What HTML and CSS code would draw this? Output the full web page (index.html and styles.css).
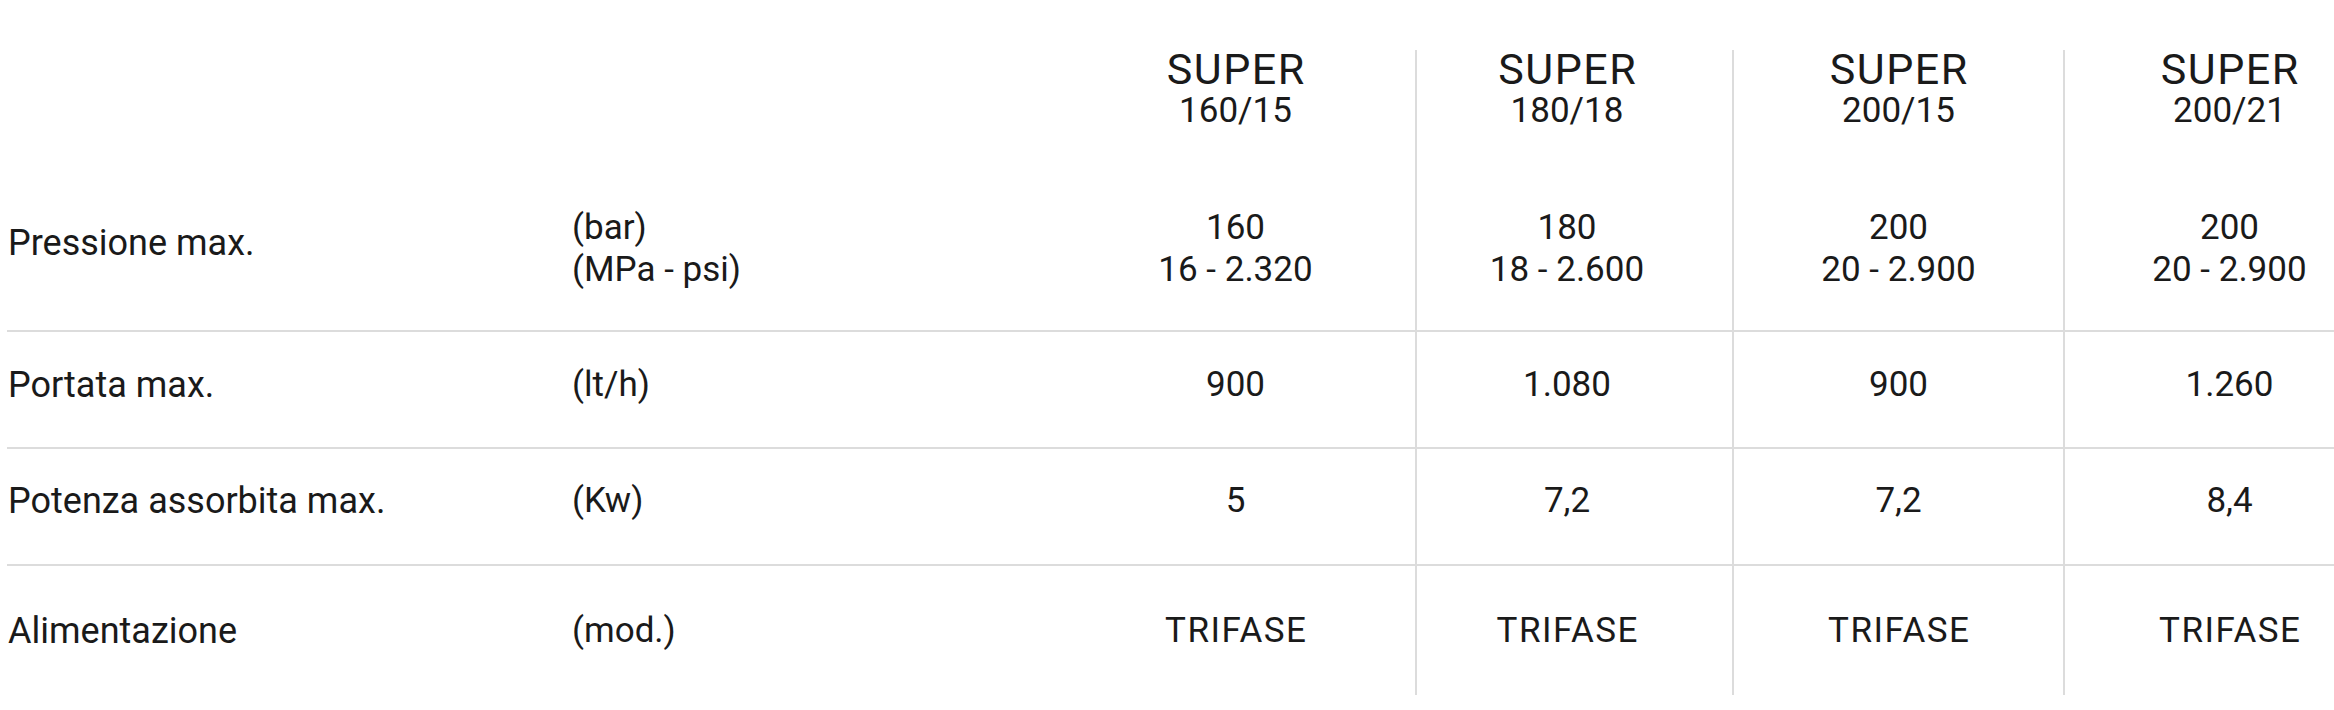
FILE: index.html
```html
<!DOCTYPE html>
<html lang="it">
<head>
<meta charset="utf-8">
<title>Caratteristiche tecniche SUPER</title>
<link rel="stylesheet" href="styles.css">
</head>
<body>
<div class="specs">
  <div class="row row-head">
    <div class="cell label"></div>
    <div class="cell unit"></div>
    <div class="cell val c1"><span class="series">SUPER</span><span class="model">160/15</span></div>
    <div class="cell val c2"><span class="series">SUPER</span><span class="model">180/18</span></div>
    <div class="cell val c3"><span class="series">SUPER</span><span class="model">200/15</span></div>
    <div class="cell val c4"><span class="series">SUPER</span><span class="model">200/21</span></div>
  </div>
  <div class="row row-press">
    <div class="cell label">Pressione max.</div>
    <div class="cell unit"><span>(bar)</span><span>(MPa - psi)</span></div>
    <div class="cell val c1"><span>160</span><span>16 - 2.320</span></div>
    <div class="cell val c2"><span>180</span><span>18 - 2.600</span></div>
    <div class="cell val c3"><span>200</span><span>20 - 2.900</span></div>
    <div class="cell val c4"><span>200</span><span>20 - 2.900</span></div>
  </div>
  <div class="row row-flow">
    <div class="cell label">Portata max.</div>
    <div class="cell unit"><span>(lt/h)</span></div>
    <div class="cell val c1"><span>900</span></div>
    <div class="cell val c2"><span>1.080</span></div>
    <div class="cell val c3"><span>900</span></div>
    <div class="cell val c4"><span>1.260</span></div>
  </div>
  <div class="row row-power">
    <div class="cell label">Potenza assorbita max.</div>
    <div class="cell unit"><span>(Kw)</span></div>
    <div class="cell val c1"><span>5</span></div>
    <div class="cell val c2"><span>7,2</span></div>
    <div class="cell val c3"><span>7,2</span></div>
    <div class="cell val c4"><span>8,4</span></div>
  </div>
  <div class="row row-supply">
    <div class="cell label">Alimentazione</div>
    <div class="cell unit"><span>(mod.)</span></div>
    <div class="cell val c1"><span class="caps">TRIFASE</span></div>
    <div class="cell val c2"><span class="caps">TRIFASE</span></div>
    <div class="cell val c3"><span class="caps">TRIFASE</span></div>
    <div class="cell val c4"><span class="caps">TRIFASE</span></div>
  </div>
</div>
</body>
</html>
```
FILE: styles.css
```css
html, body {
  margin: 0;
  padding: 0;
  overflow: hidden;
  background: #ffffff;
}

body {
  font-family: Roboto, "Noto Sans", "Liberation Sans", sans-serif;
  color: #1a1a1a;
}

.specs {
  width: max-content;
  padding: 50px 0 0 7px;
}

.row {
  display: grid;
  grid-template-columns: 565px 498px 345px 317px 331px 331px;
  align-items: stretch;
  box-sizing: border-box;
}

.row-press,
.row-flow,
.row-power {
  border-bottom: 2px solid #dcdcdc;
}

.row-head { height: 100px; }
.row-press { height: 182px; }
.row-flow { height: 117px; }
.row-power { height: 117px; }
.row-supply { height: 129px; }

.cell {
  display: flex;
  flex-direction: column;
  font-size: 35px;
  line-height: 42px;
}

.label {
  font-size: 36px;
  padding-left: 1px;
}

.val {
  align-items: center;
  text-align: center;
}

.c1 { padding-right: 14px; }
.c2 { padding-right: 15px; border-left: 2px solid #dcdcdc; }
.c3 { border-left: 2px solid #dcdcdc; }
.c4 { border-left: 2px solid #dcdcdc; }

.series {
  font-size: 43px;
  line-height: 38px;
  letter-spacing: 1.5px;
  margin-right: -1.5px;
}

.model {
  font-size: 35px;
  line-height: 46px;
}

.caps {
  letter-spacing: 1.5px;
  margin-right: -1.5px;
}

.row-press .cell { padding-top: 57px; }
.row-press .label { padding-top: 72px; }
.row-flow .cell { padding-top: 32px; }
.row-power .cell { padding-top: 31px; }
.row-supply .cell { padding-top: 44px; }
```
